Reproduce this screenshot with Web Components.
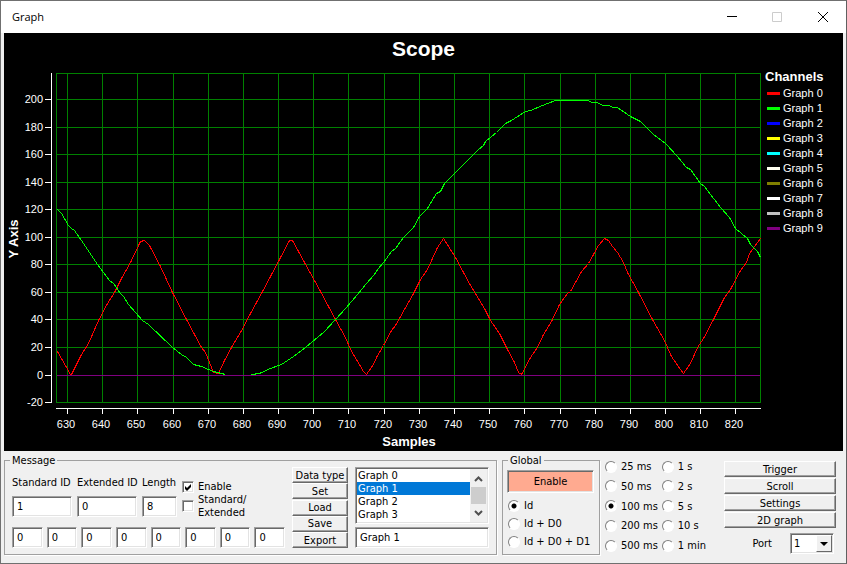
<!DOCTYPE html>
<html lang="en">
<head>
<meta charset="utf-8">
<title>Graph</title>
<style>
    body {
        margin: 0;
        background: #f0f0f0;
        color: #000;
        font: 11px/13px "DejaVu Sans Condensed", "DejaVu Sans", sans-serif;
    }
</style>
</head>
<body>
<graph-window></graph-window>

<script>
// Helper: attach an open root and fill it
function shadow(el, html) {
    const root = el.attachShadow({ mode: 'open' });
    root.innerHTML = html;
    return root;
}

const SUNKEN = `
    border: 1px solid;
    border-color: #a0a0a0 #fff #fff #a0a0a0;
    box-shadow: inset 1px 1px 0 #696969, inset -1px -1px 0 #e3e3e3;
`;

// Title bar with the caption buttons
class TitleBar extends HTMLElement {
    connectedCallback() {
        shadow(this, `
            <style>
                :host {
                    display: flex;
                    height: 32px;
                    background: #fff;
                    align-items: center;
                    padding-left: 11px;
                }
                .caption {
                    flex: 1;
                    font: 11px/16px "Open Sans", sans-serif;
                }
                button {
                    width: 46px;
                    height: 32px;
                    padding: 0;
                    border: 0;
                    background: none;
                    color: #000;
                }
                button:disabled { color: #ccc; }
                svg {
                    display: block;
                    margin: auto;
                    fill: none;
                    stroke: currentColor;
                }
            </style>
            <span class="caption"><slot></slot></span>
            <button aria-label="Minimize"><svg width="12" height="12"><path d="M2 5.5h10"/></svg></button>
            <button aria-label="Maximize" disabled><svg width="12" height="12"><path d="M1.5 1.5h9v9h-9z"/></svg></button>
            <button aria-label="Close"><svg width="12" height="12"><path d="M1 1l10 10M11 1L1 11"/></svg></button>
        `);
    }
}
customElements.define('title-bar', TitleBar);

// Channel names with their colours
class ChannelLegend extends HTMLElement {
    connectedCallback() {
        const colors = ['#f00', '#0f0', '#00f', '#ff0', '#0ff', '#fffff0', '#808000', '#fff', '#c0c0c0', '#800080'];
        shadow(this, `
            <style>
                :host { display: block; }
                h2 {
                    margin: 0;
                    font-size: 13px;
                    line-height: 18px;
                }
                ul {
                    margin: 0;
                    padding: 0 0 0 2px;
                    list-style: none;
                }
                li {
                    display: flex;
                    align-items: center;
                    gap: 3px;
                    line-height: 15px;
                }
                i {
                    width: 13px;
                    height: 3px;
                }
            </style>
            <h2>Channels</h2>
            <ul>
                ${colors.map((c, i) => `<li><i style="background:${c}"></i>Graph ${i}</li>`).join('')}
            </ul>
        `);
    }
}
customElements.define('channel-legend', ChannelLegend);

// The scope: title, plot and legend
class ScopeChart extends HTMLElement {
    connectedCallback() {
        const left = 56, right = 760, top = 73, bottom = 402;
        const px = v => Math.round(67 + (v - 630) * 3.518);
        const py = v => Math.round(99 + (200 - v) * 1.378);

        let grid = '', ticks = '', labels = '';
        for (let v = 630; v <= 820; v += 10) {
            grid += `M${px(v)}.5 ${top}V${bottom}`;
            ticks += `M${px(v)}.5 408v6`;
            labels += `<text x="${px(v) - 1}" y="428" text-anchor="middle">${v}</text>`;
        }
        for (let v = -20; v <= 200; v += 20) {
            grid += `M${left} ${py(v)}.5H${right}`;
            ticks += `M45 ${py(v)}.5h6`;
            labels += `<text x="43" y="${py(v) + 4}" text-anchor="end">${v}</text>`;
        }

        const ramp = '57,351 70,374 71,374 81,354 88,343 98,320 107,303 114,292 121,278 130,262 140,241 144,240 149,245 160,266 172,292 186,319 201,347 205,352 213,372 218,373 224,360 231,347 240,332 250,313 262,291 270,276 289,240 292,240 304,262 320,291 335,319 345,337 350,349 363,371 366,374 373,364 376,357 383,345 391,330 395,325 413,293 420,279 427,269 437,247 443,238 455,257 470,285 484,308 490,320 499,333 507,349 514,362 518,372 521,374 530,357 537,347 543,334 551,321 559,304 567,293 570,291 581,271 588,263 598,245 604,238 608,240 612,246 617,252 623,262 627,272 638,292 652,319 664,340 667,347 671,356 680,369 683,373 690,363 697,347 703,338 713,319 717,311 724,297 730,289 740,270 746,262 749,253 760,238';
        const sineA = '57,209 61,213 68,225 71,228 74,230 81,240 97,264 109,280 113,283 120,293 123,296 128,304 142,320 148,324 172,347 181,354 186,357 193,364 201,366 208,369 213,371 225,374';
        const sineB = '251,374 259,373 270,368 281,364 293,356 305,347 324,331 335,319 345,308 357,294 366,283 373,275 378,268 383,262 391,251 395,248 403,237 413,227 419,216 427,208 436,193 440,191 444,183 457,170 462,165 467,160 478,149 483,145 485,141 496,132 503,125 505,123 511,120 525,111 530,110 547,103 555,100 588,100 591,102 596,102 603,105 608,105 613,107 617,107 630,116 640,121 653,134 665,143 677,156 686,167 690,169 700,183 704,186 720,207 729,217 735,228 747,238 750,244 757,251 760,257';
        const trace = (points, color) => `<polyline transform="translate(.5 .5)" points="${points}" stroke="${color}"/>`;

        shadow(this, `
            <style>
                :host {
                    display: grid;
                    grid-template-columns: minmax(0, 1fr) 81px;
                    background: #000;
                    color: #fff;
                    font: 11px "Liberation Sans", Arial, sans-serif;
                }
                h1 {
                    grid-column: 1 / -1;
                    margin: 0;
                    height: 35px;
                    font-size: 21px;
                    line-height: 32px;
                    text-align: center;
                }
                svg {
                    display: block;
                    width: 100%;
                }
                path, polyline {
                    fill: none;
                    shape-rendering: crispEdges;
                }
                text { fill: #fff; }
                .name {
                    font-size: 13px;
                    font-weight: bold;
                    text-anchor: middle;
                }
                channel-legend { padding-left: 3px; }
            </style>
            <h1>Scope</h1>
            <svg viewBox="4 68 758 383">
                <path stroke="#008000" d="${grid}M${left}.5 ${top}.5H${right}.5V${bottom}.5H${left}.5z"/>
                <path stroke="#fff" d="M51.5 73V403M56 408.5H761${ticks}"/>
                ${labels}
                ${trace(ramp, '#f00')}
                ${trace(sineA, '#0f0')}
                ${trace(sineB, '#0f0')}
                <path stroke="#800080" d="M57 375.5H760"/>
                <text class="name" x="409" y="446">Samples</text>
                <text class="name" transform="translate(18 239) rotate(-90)">Y Axis</text>
            </svg>
            <channel-legend></channel-legend>
        `);
    }
}
customElements.define('scope-chart', ScopeChart);

// Etched frame with a caption
class GroupBox extends HTMLElement {
    connectedCallback() {
        shadow(this, `
            <style>
                :host { display: block; }
                fieldset {
                    margin: 0;
                    min-width: 0;
                    padding: 0 7px 6px;
                    border: 1px solid #a0a0a0;
                    box-shadow: 1px 1px 0 #fff;
                }
                :host([tight]) fieldset { padding: 0 5px 6px 4px; }
                legend {
                    padding: 0 2px;
                    margin-left: -2px;
                }
                :host([tight]) legend { margin-left: 1px; }
                .content { height: 81px; }
            </style>
            <fieldset>
                <legend>${this.getAttribute('caption')}</legend>
                <div class="content"><slot></slot></div>
            </fieldset>
        `);
    }
}
customElements.define('group-box', GroupBox);

class TextField extends HTMLElement {
    connectedCallback() {
        const label = this.getAttribute('label');
        const hint = this.getAttribute('hint') || '';
        shadow(this, `
            <style>
                :host { display: block; }
                label {
                    display: block;
                    margin: 0 -4px 6px 0;
                    line-height: 15px;
                    white-space: nowrap;
                }
                input {
                    display: block;
                    box-sizing: border-box;
                    width: 100%;
                    height: 21px;
                    padding: 0 4px;
                    border-radius: 0;
                    background: #fff;
                    color: #000;
                    font: inherit;
                    ${SUNKEN}
                }
            </style>
            ${label ? `<label for="field">${label}</label>` : ''}
            <input id="field" type="text" value="${this.getAttribute('value')}" ${hint ? `aria-label="${hint}"` : ''}>
        `);
    }
}
customElements.define('text-field', TextField);

class PushButton extends HTMLElement {
    connectedCallback() {
        shadow(this, `
            <style>
                :host { display: block; }
                button {
                    display: block;
                    width: 100%;
                    height: 16px;
                    padding: 0;
                    border: 1px solid;
                    border-color: #fff #696969 #696969 #fff;
                    box-shadow: inset -1px -1px 0 #a0a0a0;
                    background: #f0f0f0;
                    color: #000;
                    font: inherit;
                    white-space: nowrap;
                }
                :host([pressed]) button {
                    height: 23px;
                    background: #ffaa90;
                    ${SUNKEN}
                }
            </style>
            <button><slot></slot></button>
        `);
    }
}
customElements.define('push-button', PushButton);

class CheckOption extends HTMLElement {
    connectedCallback() {
        shadow(this, `
            <style>
                :host { display: block; }
                label {
                    display: flex;
                    align-items: center;
                    gap: 4px;
                }
                input {
                    appearance: none;
                    flex: none;
                    width: 12px;
                    height: 12px;
                    margin: 0;
                    background: #fff;
                    ${SUNKEN}
                }
                input:checked {
                    background: #fff url('data:image/svg+xml,<svg xmlns="http://www.w3.org/2000/svg" width="8" height="8"><path d="M1 3v3l2 2 4-4V1L3 5z"/></svg>') no-repeat center;
                }
            </style>
            <label><input type="checkbox" ${this.hasAttribute('checked') ? 'checked' : ''}><span><slot></slot></span></label>
        `);
    }
}
customElements.define('check-option', CheckOption);

// options="a|b|c", filled column by column
class RadioList extends HTMLElement {
    connectedCallback() {
        const value = this.getAttribute('value');
        shadow(this, `
            <style>
                :host {
                    display: grid;
                    grid-auto-flow: column;
                    grid-template-rows: repeat(var(--rows), auto);
                    justify-content: start;
                }
                label {
                    display: flex;
                    align-items: center;
                    gap: 4px;
                    white-space: nowrap;
                }
                input {
                    appearance: none;
                    width: 12px;
                    height: 12px;
                    margin: 0;
                    border: 1px solid;
                    border-color: #808080 #fff #fff #808080;
                    border-radius: 50%;
                    background: #fff;
                }
                input:checked { background: radial-gradient(circle, #000 2px, #fff 3px); }
            </style>
            ${this.getAttribute('options').split('|').map(o => `
                <label><input type="radio" name="choice" ${o === value ? 'checked' : ''}>${o}</label>
            `).join('')}
        `);
    }
}
customElements.define('radio-list', RadioList);

// List box with its own scroll bar beside the options
class ListBox extends HTMLElement {
    connectedCallback() {
        const options = Array.from({ length: 10 }, (_, i) => `<option ${i === 1 ? 'selected' : ''}>Graph ${i}</option>`);
        shadow(this, `
            <style>
                :host {
                    display: flex;
                    box-sizing: border-box;
                    height: 57px;
                    background: #fff;
                    ${SUNKEN}
                }
                select {
                    flex: 1;
                    min-width: 0;
                    height: 53px;
                    padding: 0;
                    margin: 1px 0 1px 1px;
                    border: 0;
                    outline: 0;
                    background: none;
                    color: #000;
                    font: inherit;
                    scrollbar-width: none;
                }
                option {
                    min-height: 13px;
                    height: 13px;
                    padding: 0 1px;
                    line-height: 13px;
                }
                option:checked {
                    background: #0078d7 linear-gradient(#0078d7, #0078d7);
                    color: #fff;
                    -webkit-text-fill-color: #fff;
                }
                .bar {
                    display: flex;
                    flex-direction: column;
                    width: 17px;
                    margin: 1px 1px 1px 0;
                    background: #f0f0f0;
                }
                .thumb {
                    flex: 1;
                    margin: 0 1px;
                    background: #cdcdcd;
                }
                svg {
                    display: block;
                    fill: none;
                    stroke: #505050;
                    stroke-width: 2;
                }
            </style>
            <select size="4" aria-label="Graph list">${options.join('')}</select>
            <div class="bar">
                <svg width="17" height="18"><path d="M5 12l3.500-3.500L12 12"/></svg>
                <div class="thumb"></div>
                <svg width="17" height="18"><path d="M5 7l3.500 3.500L12 7"/></svg>
            </div>
        `);
    }
}
customElements.define('list-box', ListBox);

class PortPicker extends HTMLElement {
    connectedCallback() {
        shadow(this, `
            <style>
                :host {
                    display: flex;
                    align-items: center;
                    justify-content: flex-end;
                    gap: 18px;
                    padding-right: 2px;
                }
                .combo {
                    display: grid;
                    box-sizing: border-box;
                    width: 44px;
                    height: 21px;
                    padding: 1px;
                    background: #fff;
                    ${SUNKEN}
                }
                select, .drop { grid-area: 1 / 1; }
                select {
                    appearance: none;
                    padding: 0 2px;
                    border: 0;
                    background: none;
                    color: #000;
                    font: inherit;
                }
                .drop {
                    justify-self: end;
                    width: 16px;
                    box-sizing: border-box;
                    border: 1px solid;
                    border-color: #fff #696969 #696969 #fff;
                    background: #f0f0f0;
                    pointer-events: none;
                }
                svg { display: block; }
            </style>
            <label for="port">Port</label>
            <div class="combo">
                <select id="port"><option>1</option><option>2</option></select>
                <span class="drop"><svg width="14" height="15"><path d="M3 6h8l-4 4z"/></svg></span>
            </div>
        `);
    }
}
customElements.define('port-picker', PortPicker);

// Everything below the scope
class ControlPanel extends HTMLElement {
    connectedCallback() {
        const bytes = Array.from({ length: 8 }, (_, i) => `<text-field value="0" hint="Byte ${i}"></text-field>`);
        shadow(this, `
            <style>
                :host {
                    display: grid;
                    grid-template-columns: minmax(0, 1fr) 98px 114px 112px;
                    gap: 5px;
                    padding: 3px 10px 8px 3px;
                }
                .message {
                    display: flex;
                    gap: 7px;
                    height: 100%;
                }
                .ids {
                    display: flex;
                    flex-direction: column;
                    justify-content: flex-end;
                    gap: 8px;
                    width: 273px;
                }
                .top {
                    display: grid;
                    grid-template-columns: 60px 60px 35px 1fr;
                    gap: 5px;
                }
                .checks { padding-top: 5px; }
                .bytes {
                    display: grid;
                    grid-template-columns: repeat(8, minmax(0, 1fr));
                    gap: 4px;
                }
                .actions {
                    display: grid;
                    align-content: space-between;
                    width: 56px;
                }
                .lists {
                    display: flex;
                    flex-direction: column;
                    justify-content: flex-end;
                    gap: 3px;
                    flex: 1;
                    min-width: 0;
                }
                .global {
                    padding-top: 3px;
                }
                .mode {
                    --rows: 3;
                    margin-top: 6px;
                    row-gap: 5px;
                    padding-left: 1px;
                }
                .rate {
                    --rows: 5;
                    column-gap: 4px;
                    align-content: space-between;
                    padding: 6px 0 3px;
                }
                .side {
                    display: grid;
                    align-content: start;
                    gap: 1px;
                    padding-top: 7px;
                }
                port-picker { margin-top: 4px; }
            </style>
            <group-box caption="Message">
                <div class="message">
                    <div class="ids">
                        <div class="top">
                            <text-field label="Standard ID" value="1"></text-field>
                            <text-field label="Extended ID" value="0"></text-field>
                            <text-field label="Length" value="8"></text-field>
                            <div class="checks">
                                <check-option checked>Enable</check-option>
                                <check-option>Standard/<br>Extended</check-option>
                            </div>
                        </div>
                        <div class="bytes">${bytes.join('')}</div>
                    </div>
                    <div class="actions">
                        <push-button>Data type</push-button>
                        <push-button>Set</push-button>
                        <push-button>Load</push-button>
                        <push-button>Save</push-button>
                        <push-button>Export</push-button>
                    </div>
                    <div class="lists">
                        <list-box></list-box>
                        <text-field value="Graph 1" hint="Graph name"></text-field>
                    </div>
                </div>
            </group-box>
            <group-box caption="Global" tight>
                <div class="global">
                    <push-button pressed>Enable</push-button>
                    <radio-list class="mode" options="Id|Id + D0|Id + D0 + D1" value="Id"></radio-list>
                </div>
            </group-box>
            <radio-list class="rate" options="25 ms|50 ms|100 ms|200 ms|500 ms|1 s|2 s|5 s|10 s|1 min" value="100 ms"></radio-list>
            <div class="side">
                <push-button>Trigger</push-button>
                <push-button>Scroll</push-button>
                <push-button>Settings</push-button>
                <push-button>2D graph</push-button>
                <port-picker></port-picker>
            </div>
        `);
    }
}
customElements.define('control-panel', ControlPanel);

class GraphWindow extends HTMLElement {
    connectedCallback() {
        shadow(this, `
            <style>
                :host {
                    display: block;
                    box-sizing: border-box;
                    min-height: 100vh;
                    border: 1px solid #707070;
                    border-right-color: #606060;
                    background: #f0f0f0;
                }
                scope-chart { margin: 0 3px; }
            </style>
            <title-bar>Graph</title-bar>
            <scope-chart></scope-chart>
            <control-panel></control-panel>
        `);
    }
}
customElements.define('graph-window', GraphWindow);
</script>
</body>
</html>
